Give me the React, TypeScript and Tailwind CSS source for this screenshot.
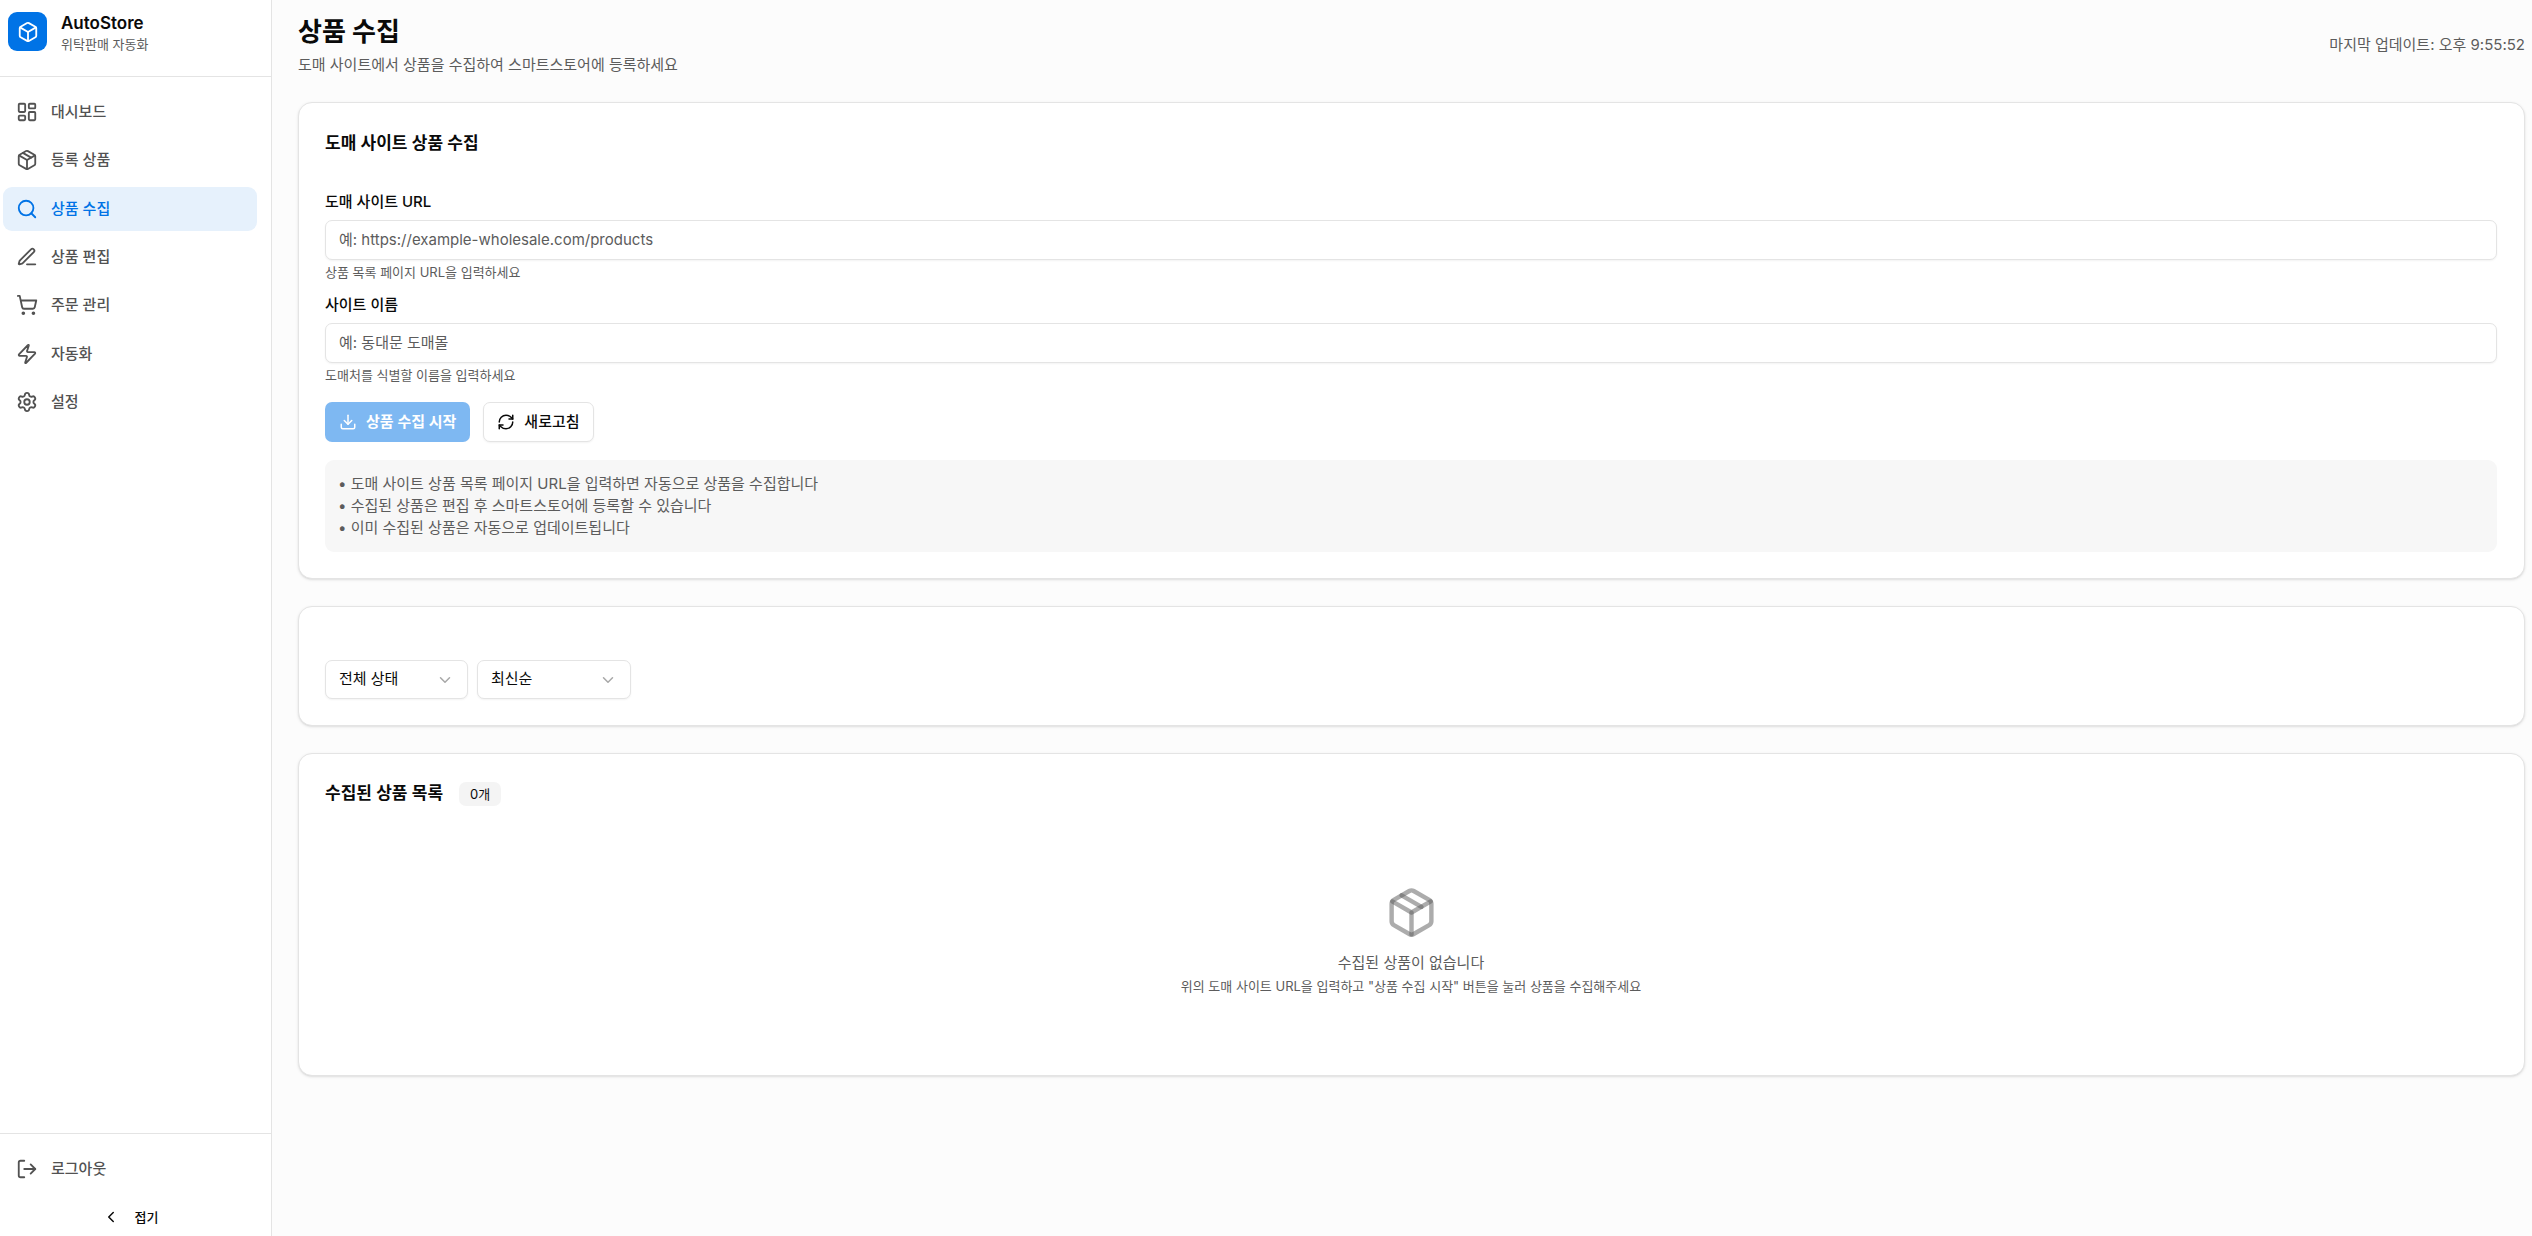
import { useState } from "react";
import type { ComponentType, ReactNode } from "react";
import {
  Box,
  ChevronDown,
  ChevronLeft,
  Download,
  LayoutDashboard,
  LogOut,
  Package,
  RefreshCw,
  Search,
  Settings,
  ShoppingCart,
  Zap,
} from "lucide-react";

function EditIcon({ className }: { className?: string }) {
  return (
    <svg
      className={className}
      viewBox="0 0 24 24"
      fill="none"
      stroke="currentColor"
      strokeWidth="2"
      strokeLinecap="round"
      strokeLinejoin="round"
      aria-hidden="true"
    >
      <path d="M12 20h9" />
      <path d="M16.376 3.622a1 1 0 0 1 3.002 3.002L7.368 18.635a2 2 0 0 1-.855.506l-2.872.838a.5.5 0 0 1-.62-.62l.838-2.872a2 2 0 0 1 .506-.854z" />
    </svg>
  );
}

type NavItem = {
  label: string;
  icon: ComponentType<{ className?: string }>;
  active?: boolean;
};

const navItems: NavItem[] = [
  { label: "대시보드", icon: LayoutDashboard },
  { label: "등록 상품", icon: Package },
  { label: "상품 수집", icon: Search, active: true },
  { label: "상품 편집", icon: EditIcon },
  { label: "주문 관리", icon: ShoppingCart },
  { label: "자동화", icon: Zap },
  { label: "설정", icon: Settings },
];

function Sidebar() {
  return (
    <aside className="flex w-[272px] shrink-0 flex-col border-r border-[#e4e4e4] bg-white">
      <div className="flex h-[77px] items-start gap-[14px] border-b border-[#e4e4e4] px-2 pt-3">
        <div className="flex size-[39px] items-center justify-center rounded-[9px] bg-[#0073e6] text-white">
          <Box className="size-[22px]" />
        </div>
        <div>
          <p className="text-[17px] leading-[22px] font-semibold">AutoStore</p>
          <p className="text-[13px] leading-5 text-[#5c5c5c]">위탁판매 자동화</p>
        </div>
      </div>

      <nav className="flex h-[347px] flex-col justify-between pt-[13px] pr-[14px] pl-[3px]">
        {navItems.map(({ label, icon: Icon, active }) => (
          <a
            key={label}
            href="#"
            aria-current={active ? "page" : undefined}
            className={
              active
                ? "flex h-11 items-center gap-[13px] rounded-[9px] bg-[#e6f1fc] px-[13px] text-[15px] leading-[22px] font-medium text-[#0073e6]"
                : "flex h-11 items-center gap-[13px] rounded-[9px] px-[13px] text-[15px] leading-[22px] font-medium text-[#525252]"
            }
          >
            <Icon className="size-[22px] shrink-0" />
            {label}
          </a>
        ))}
      </nav>

      <div className="mt-auto border-t border-[#e4e4e4] pt-[13px] pr-[14px] pb-[2px] pl-[3px]">
        <button
          type="button"
          className="flex h-11 w-full items-center gap-[13px] rounded-[9px] px-[13px] text-[15px] leading-[22px] font-medium text-[#525252]"
        >
          <LogOut className="size-[22px]" />
          로그아웃
        </button>
        <button
          type="button"
          className="mt-2 flex h-[35px] w-full items-center justify-center gap-[15px] rounded-[9px] text-[13px] leading-5 font-medium"
        >
          <ChevronLeft className="size-[18px]" />
          접기
        </button>
      </div>
    </aside>
  );
}

function Card({ children }: { children: ReactNode }) {
  return (
    <section className="rounded-[14px] border border-[#e4e4e4] bg-white pr-[27px] pb-[26px] pl-[26px] shadow-sm">
      {children}
    </section>
  );
}

function Field({
  id,
  label,
  placeholder,
  hint,
}: {
  id: string;
  label: string;
  placeholder: string;
  hint: string;
}) {
  return (
    <div>
      <label htmlFor={id} className="block text-[15px] leading-5 font-medium">
        {label}
      </label>
      <input
        id={id}
        type="text"
        placeholder={placeholder}
        aria-describedby={`${id}-hint`}
        className="mt-2 block h-10 w-full rounded-[7px] border border-[#e4e4e4] bg-white px-[13px] pb-[2px] text-[15px] leading-[22px] shadow-xs placeholder:text-[#5c5c5c]"
      />
      <p id={`${id}-hint`} className="mt-1 text-[13px] leading-4 text-[#5c5c5c]">
        {hint}
      </p>
    </div>
  );
}

function FilterSelect({
  label,
  options,
  width,
}: {
  label: string;
  options: string[];
  width: string;
}) {
  return (
    <div className={`relative ${width}`}>
      <select
        aria-label={label}
        className="h-[39px] w-full appearance-none rounded-[7px] border border-[#e4e4e4] bg-white px-[13px] pb-[2px] text-[15px] leading-[22px] shadow-xs"
      >
        {options.map((option) => (
          <option key={option}>{option}</option>
        ))}
      </select>
      <ChevronDown className="pointer-events-none absolute top-[11px] right-[14px] size-[18px] text-[#a8a8a8]" />
    </div>
  );
}

export default function App() {
  const [updatedAt] = useState("오후 9:55:52");

  return (
    <div className="flex min-h-screen bg-[#fcfcfc] font-[Inter,'Noto_Sans_CJK_KR',sans-serif] text-[#0a0a0a]">
      <Sidebar />

      <main className="min-w-0 flex-1 pr-[7px] pl-[26px]">
        <header className="flex h-[102px] items-start justify-between pt-[14px]">
          <div>
            <h1 className="text-[26px] leading-9 font-bold">상품 수집</h1>
            <p className="mt-1 text-[15px] leading-[22px] text-[#5c5c5c]">
              도매 사이트에서 상품을 수집하여 스마트스토어에 등록하세요
            </p>
          </div>
          <p className="mt-5 text-[15px] leading-[22px] text-[#5c5c5c]">
            마지막 업데이트: {updatedAt}
          </p>
        </header>

        <div className="flex flex-col gap-[27px]">
          <Card>
            <h2 className="pt-[26px] text-[17px] leading-7 font-semibold">도매 사이트 상품 수집</h2>
            <form className="mt-[35px]" onSubmit={(event) => event.preventDefault()}>
              <div className="flex flex-col gap-[15px]">
                <Field
                  id="site-url"
                  label="도매 사이트 URL"
                  placeholder="예: https://example-wholesale.com/products"
                  hint="상품 목록 페이지 URL을 입력하세요"
                />
                <Field
                  id="site-name"
                  label="사이트 이름"
                  placeholder="예: 동대문 도매몰"
                  hint="도매처를 식별할 이름을 입력하세요"
                />
              </div>
              <div className="mt-[19px] flex gap-[13px]">
                <button
                  type="submit"
                  disabled
                  className="flex h-10 items-center gap-[9px] rounded-[7px] bg-[#0073e6] px-[14px] text-[15px] leading-[22px] font-semibold text-white opacity-50"
                >
                  <Download className="size-[18px]" />
                  상품 수집 시작
                </button>
                <button
                  type="button"
                  className="flex h-10 items-center gap-[9px] rounded-[7px] border border-[#e4e4e4] bg-white px-[13px] text-[15px] leading-[22px] font-medium shadow-xs"
                >
                  <RefreshCw className="size-[18px]" />
                  새로고침
                </button>
              </div>
            </form>
            <div className="mt-[18px] rounded-[9px] bg-[#f7f7f7] p-[13px] text-[15px] leading-[22px] text-[#5c5c5c]">
              <p>• 도매 사이트 상품 목록 페이지 URL을 입력하면 자동으로 상품을 수집합니다</p>
              <p>• 수집된 상품은 편집 후 스마트스토어에 등록할 수 있습니다</p>
              <p>• 이미 수집된 상품은 자동으로 업데이트됩니다</p>
            </div>
          </Card>

          <Card>
            <div className="flex gap-[9px] pt-[53px]">
              <FilterSelect
                label="상태"
                options={["전체 상태", "수집됨", "편집됨", "등록됨"]}
                width="w-[143px]"
              />
              <FilterSelect
                label="정렬"
                options={["최신순", "이름순", "가격순"]}
                width="w-[154px]"
              />
            </div>
          </Card>

          <Card>
            <div className="flex items-end gap-4 pt-[26px]">
              <h2 className="text-[17px] leading-[26px] font-semibold">수집된 상품 목록</h2>
              <span className="rounded-[7px] bg-[#f4f4f4] px-[11px] text-[13px] leading-6">
                0개
              </span>
            </div>
            <div className="flex flex-col items-center pt-20 pb-[53px] text-center text-[#5c5c5c]">
              <Package className="size-[53px] text-[#595959]/50" />
              <p className="mt-[13px] text-[15px] leading-[22px]">수집된 상품이 없습니다</p>
              <p className="mt-[2px] text-[13px] leading-5">
                위의 도매 사이트 URL을 입력하고 "상품 수집 시작" 버튼을 눌러 상품을 수집해주세요
              </p>
            </div>
          </Card>
        </div>
      </main>
    </div>
  );
}
